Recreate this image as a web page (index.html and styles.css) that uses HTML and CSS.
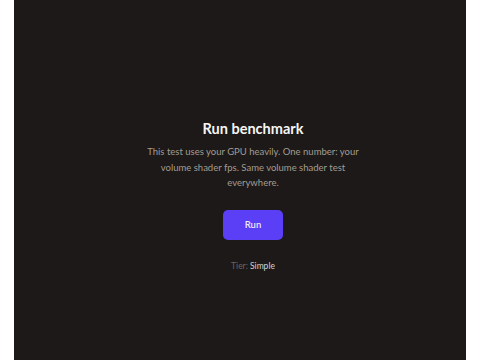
FILE: index.html
```html
<!DOCTYPE html>
<html lang="en">
<head>
    <meta charset="UTF-8">
    <title>Run benchmark</title>
    <link rel="stylesheet" href="styles.css">
</head>
<body>
    <div class="panel">
        <div class="intro">
            <h1>Run benchmark</h1>
            <p class="desc">This test uses your GPU heavily. One number: your volume shader fps. Same volume shader test everywhere.</p>
            <button class="run-btn">Run</button>
            <p class="tier">Tier: <span>Simple</span></p>
        </div>
    </div>
</body>
</html>
```

FILE: styles.css
```css
body {
    margin: 0;
    background: #ffffff;
    font-family: Lato, "Noto Sans", sans-serif;
}

.panel {
    margin: 0 14px;
    padding-left: 26px;
    height: 360px;
    background: #1c1918;
    display: flex;
    justify-content: center;
}

.intro {
    padding-top: 120px;
    width: 228px;
    text-align: center;
}

h1 {
    margin: 0;
    font-size: 14.5px;
    font-weight: 700;
    color: #f5f5f4;
    line-height: 18px;
}

.desc {
    margin: 6px 0 0;
    font-size: 9.5px;
    line-height: 15.5px;
    color: #a39c92;
}

.run-btn {
    margin-top: 19px;
    width: 60px;
    height: 30px;
    border: none;
    border-radius: 5px;
    background: #5b3ff6;
    color: #ede9fe;
    font-family: inherit;
    font-size: 9.5px;
    font-weight: 600;
}

.tier {
    margin: 21px 0 0;
    font-size: 8.5px;
    color: #6b6460;
}

.tier span {
    color: #d6d3d1;
}
```
